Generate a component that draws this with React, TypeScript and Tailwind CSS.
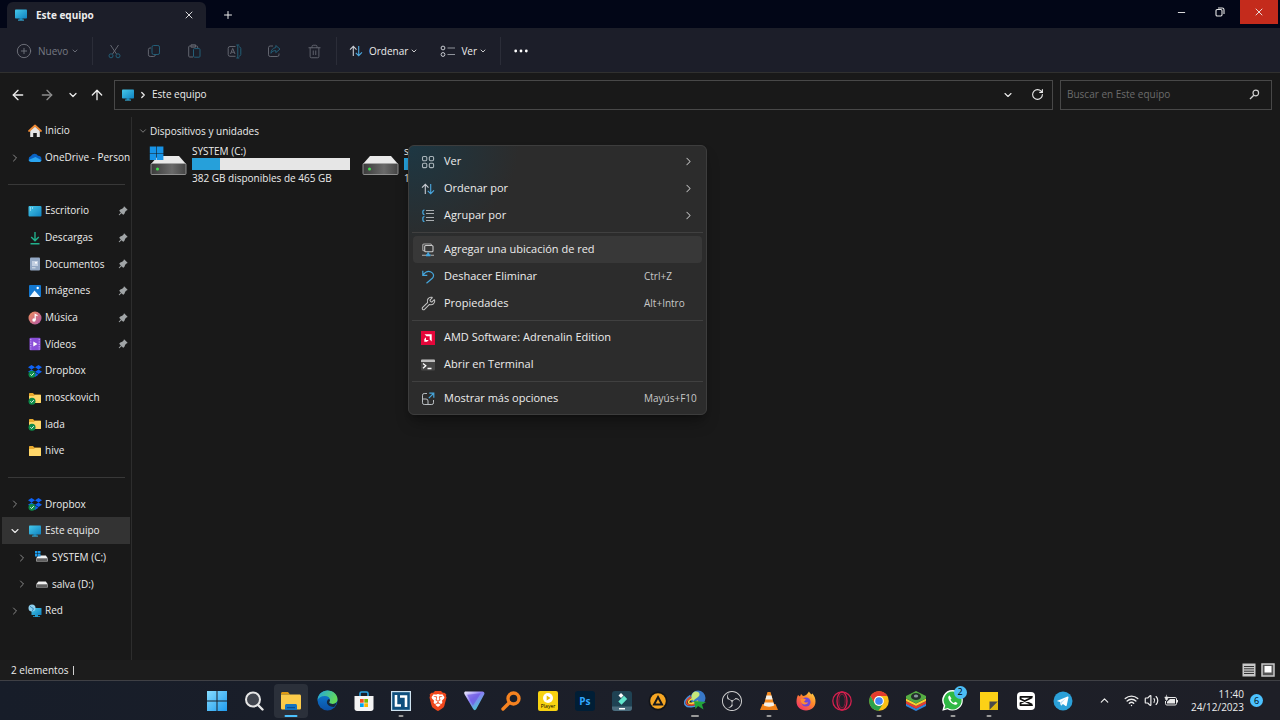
import React from "react";
import {
  ArrowLeft, ArrowRight, ArrowUp, ChevronDown, ChevronRight, ChevronUp, CirclePlus, Plus, X, Minus,
  RotateCw, Trash2, Wrench, Wifi, Volume2,
} from "lucide-react";
import { FaDropbox } from "react-icons/fa";
import { SiBrave, SiObsstudio } from "react-icons/si";
import { TbPinFilled } from "react-icons/tb";

type Kids = { children: React.ReactNode };

/* ---------- small drawings ---------- */

function Svg({ children, className, box = 24 }: Kids & { className: string; box?: number }) {
  return (
    <svg viewBox={`0 0 ${box} ${box}`} className={className} fill="none" aria-hidden="true">
      {children}
    </svg>
  );
}

function Monitor({ className = "size-[14px]" }: { className?: string }) {
  return (
    <Svg className={className} box={14}>
      <path d="M5.5 10h3v2h-3z" fill="#1478a8" />
      <path d="M4 11.6h6v1H4z" fill="#37b3e0" />
      <rect x="1" y="1.500" width="12" height="9" rx=".8" fill="url(#screen)" />
    </Svg>
  );
}

function SortIcon({ className = "size-[14px]" }: { className?: string }) {
  return (
    <Svg className={className} box={14}>
      <path d="M4.3 12V2.4M1 5.6l3.3-3.3 3.2 3.3" stroke="#c9ccd2" strokeWidth="1.1" />
      <path d="M9.7 2v9.6M6.8 8.8l2.9 2.9L13 8.4" stroke="#4aa8e0" strokeWidth="1.1" />
    </Svg>
  );
}

function Folder({ synced = false }: { synced?: boolean }) {
  return (
    <Svg className="size-[14px]" box={14}>
      <path d="M1 3c0-.6.4-1 1-1h3l1.300 1.400H12c.6 0 1 .4 1 1V11c0 .6-.4 1-1 1H2c-.6 0-1-.4-1-1z" fill="#e8a92e" />
      <path d="M1 5h4.800L7 4h5.500c.3 0 .5.2.5.5V11c0 .6-.4 1-1 1H2c-.6 0-1-.4-1-1z" fill="#ffd76a" />
      {synced && <SyncMark />}
    </Svg>
  );
}

function SyncMark() {
  return (
    <g>
      <circle cx="4" cy="10.2" r="3.5" fill="#0d8a4a" />
      <path d="M2.4 10.3l1.200 1.200 2.200-2.300" stroke="#fff" strokeWidth=".9" />
    </g>
  );
}

function DropboxIcon() {
  return (
    <span className="relative block size-[14px]">
      <FaDropbox className="size-[14px] text-[#0f62f5]" />
      <svg viewBox="0 0 14 14" className="absolute inset-0 size-[14px]" fill="none" aria-hidden="true"><SyncMark /></svg>
    </span>
  );
}

function SmallDrive({ system = false }: { system?: boolean }) {
  return (
    <Svg className="size-[14px]" box={14}>
      <path d="M3.4 4.5h7.4L13 7.4H1z" fill="#f2f2f2" />
      <rect x="1" y="7.2" width="12" height="3.6" rx=".8" fill="#8d8d8d" />
      <path d="M2 8.5h10v1H2z" fill="#333" />
      {system && <path d="M0 0h2.5v2.5H0zM3 0h2.5v2.5H3zM0 3h2.5v2.5H0zM3 3h2.5v2.5H3z" fill="#1d9cec" />}
    </Svg>
  );
}

function BigDrive({ system = false }: { system?: boolean }) {
  return (
    <svg viewBox="0 0 38 32" className="h-8 w-[38px] shrink-0" fill="none" aria-hidden="true">
      <path d="M9 12h21L37 20H2z" fill="#e9e9e9" />
      <rect x="2" y="19.500" width="35" height="11" rx="1" fill="url(#driveFront)" stroke="#a5a5a5" strokeWidth=".8" />
      <circle cx="8.500" cy="25" r="1.500" fill="#3ee04c" />
      {system && (
        <g fill="#1793e6">
          <path d="M.8 2.500h6.500v6.500H.8zM7.900 2.500h6.500v6.500H7.900z" />
          <path d="M.8 9.600h6.500v6.500H.8zM7.900 9.600h6.500v6.500H7.900z" />
        </g>
      )}
    </svg>
  );
}

function Defs() {
  return (
    <svg className="absolute size-0" aria-hidden="true">
      <defs>
        <linearGradient id="screen" x1="0" y1="0" x2="1" y2="1"><stop stopColor="#46c8ea" /><stop offset="1" stopColor="#0f82c0" /></linearGradient>
        <linearGradient id="driveFront" x1="0" y1="0" x2="1" y2="0"><stop stopColor="#3a3a3a" /><stop offset=".6" stopColor="#6a6a6a" /><stop offset="1" stopColor="#444" /></linearGradient>
        <linearGradient id="music" x1="0" y1="0" x2="1" y2="1"><stop stopColor="#f0905a" /><stop offset="1" stopColor="#b055a8" /></linearGradient>
        <linearGradient id="win" x1="0" y1="0" x2="1" y2="1"><stop stopColor="#86dcff" /><stop offset="1" stopColor="#1f9bee" /></linearGradient>
        <linearGradient id="edgeA" x1="0" y1="0" x2="1" y2=".4"><stop stopColor="#1fa2e4" /><stop offset="1" stopColor="#63da5a" /></linearGradient>
        <linearGradient id="edgeB" x1="0" y1="0" x2="0" y2="1"><stop stopColor="#0d7fd6" /><stop offset="1" stopColor="#0c4fa3" /></linearGradient>
        <linearGradient id="vpn" x1="0" y1="0" x2=".8" y2="1"><stop stopColor="#f3f1ff" /><stop offset=".45" stopColor="#8a7cf5" /><stop offset="1" stopColor="#3fd6c8" /></linearGradient>
        <linearGradient id="fox" x1="1" y1="0" x2=".2" y2="1"><stop stopColor="#ffe14d" /><stop offset=".45" stopColor="#ff8a2a" /><stop offset="1" stopColor="#f0306a" /></linearGradient>
      </defs>
    </svg>
  );
}

/* ---------- title bar and toolbar ---------- */

function TitleBar() {
  return (
    <header className="flex h-7 items-end bg-[#020617] pl-[7px]">
      <div className="flex h-[26px] w-[199px] items-center rounded-t-md bg-[#1c1e29] px-[7px]">
        <Monitor />
        <span className="ml-2 flex-1 text-[10px] font-bold">Este equipo</span>
        <button type="button" aria-label="Cerrar pestaña" className="p-1"><X className="size-3" strokeWidth={1.8} /></button>
      </div>
      <button type="button" aria-label="Nueva pestaña" className="ml-3 flex h-[26px] w-5 items-center justify-center">
        <Plus className="size-3" strokeWidth={2} />
      </button>
      <div className="ml-auto flex self-start pr-[2px]">
        <button type="button" aria-label="Minimizar" className="flex h-6 w-[38px] items-center justify-center"><Minus className="size-[11px]" strokeWidth={2} /></button>
        <button type="button" aria-label="Restaurar" className="flex h-6 w-[40px] items-center justify-center">
          <Svg className="size-[10px]" box={10}>
            <rect x="1" y="2.500" width="6" height="6.500" rx="1.200" stroke="#e6e6e6" strokeWidth="1.100" />
            <path d="M3 1h4.200C8.400 1 9 1.700 9 2.700V7" stroke="#e6e6e6" strokeWidth="1.100" />
          </Svg>
        </button>
        <button type="button" aria-label="Cerrar" className="flex h-6 w-[38px] items-center justify-center bg-[#c42b1c]"><X className="size-[12px]" strokeWidth={1.800} /></button>
      </div>
    </header>
  );
}

const Divider = () => <span className="h-7 w-px bg-[#2b2d38]" />;

const toolIcons: { label: string; icon: React.ReactNode }[] = [
  { label: "Cortar", icon: (
    <Svg className="size-[15px]" box={15}>
      <path d="M3.500 1l6 9M11.500 1l-6 9" stroke="#62656f" strokeWidth="1" />
      <circle cx="4" cy="11.800" r="2" stroke="#235e77" strokeWidth="1" /><circle cx="11" cy="11.800" r="2" stroke="#235e77" strokeWidth="1" />
    </Svg>) },
  { label: "Copiar", icon: (
    <Svg className="size-[14px]" box={14}>
      <path d="M4 4H3a1.600 1.600 0 0 0-1.600 1.600v5.200A1.800 1.800 0 0 0 3.200 12.500h3.600A1.700 1.700 0 0 0 8.300 11" stroke="#62656f" />
      <rect x="5" y="1.500" width="7.500" height="9" rx="1.600" stroke="#235e77" />
    </Svg>) },
  { label: "Pegar", icon: (
    <Svg className="size-[14px]" box={14}>
      <path d="M6 13H2.700A1 1 0 0 1 1.700 12V3a1 1 0 0 1 1-1h7a1 1 0 0 1 1 1v1M4 .8h4.500v2.400H4z" stroke="#62656f" />
      <rect x="6.500" y="4.600" width="6.500" height="8.600" rx="1" stroke="#235e77" />
    </Svg>) },
  { label: "Cambiar nombre", icon: (
    <Svg className="size-[15px]" box={15}>
      <path d="M8.500 2.500H3A1.800 1.800 0 0 0 1.200 4.300v6.200A1.800 1.800 0 0 0 3 12.300h5.500M3.500 10l2.200-5.600L8 10M4.300 8.200h2.900" stroke="#62656f" />
      <path d="M9.300 1h3M9.300 14h3M10.800 1v13M12 2.800c1.200.2 1.800.8 1.800 1.700v6c0 .9-.6 1.500-1.800 1.700" stroke="#235e77" />
    </Svg>) },
  { label: "Compartir", icon: (
    <Svg className="size-[14px]" box={14}>
      <path d="M6 2H3.200A1.700 1.700 0 0 0 1.500 3.700v7.100a1.700 1.700 0 0 0 1.700 1.700h7.100a1.700 1.700 0 0 0 1.700-1.700V9.500" stroke="#62656f" />
      <path d="M8.800 1.500l4.200 3.600-4.200 3.500V6.600C6.500 6.500 5 7.400 4 9.300c0-3 1.700-5.400 4.800-5.700z" stroke="#235e77" strokeLinejoin="round" />
    </Svg>) },
  { label: "Eliminar", icon: <Trash2 className="size-[15px] text-[#62656f]" strokeWidth={1.500} /> },
];

function ToolBar() {
  return (
    <div role="toolbar" className="flex h-[45px] items-center border-b border-[#30302f] bg-[#1c1e29] pt-[2px] pl-4 text-[10px]">
      <button type="button" className="flex w-[76px] items-center text-[#777a83]">
        <CirclePlus className="size-4" strokeWidth={1.300} />
        <span className="ml-[6px]">Nuevo</span>
        <ChevronDown className="ml-[3px] size-2" strokeWidth={2.500} />
      </button>
      <Divider />
      <div className="flex pr-[2px] pl-[1px]">
        {toolIcons.map((t) => (
          <button key={t.label} type="button" aria-label={t.label} className="flex h-7 w-10 items-center justify-center">{t.icon}</button>
        ))}
      </div>
      <Divider />
      <button type="button" className="ml-3 flex items-center">
        <SortIcon />
        <span className="ml-[6px]">Ordenar</span>
        <ChevronDown className="ml-[2px] size-2" strokeWidth={2.500} />
      </button>
      <button type="button" className="ml-[22px] flex items-center">
        <Svg className="size-[15px]" box={15}>
          <circle cx="3" cy="4" r="1.900" stroke="#c9ccd2" /><circle cx="3" cy="10.500" r="1.900" stroke="#c9ccd2" />
          <path d="M7.500 4H15M7.500 10.500H15" stroke="#8f939b" strokeWidth="1.200" />
        </Svg>
        <span className="ml-[6px]">Ver</span>
        <ChevronDown className="ml-[2px] size-2" strokeWidth={2.500} />
      </button>
      <span className="ml-[13px] flex"><Divider /></span>
      <button type="button" aria-label="Más opciones" className="ml-3 p-[1px]">
        <Svg className="size-[14px]" box={14}>
          <circle cx="1.700" cy="7" r="1.400" fill="#fff" /><circle cx="7" cy="7" r="1.400" fill="#fff" /><circle cx="12.300" cy="7" r="1.400" fill="#fff" />
        </Svg>
      </button>
    </div>
  );
}

function NavBar() {
  return (
    <div className="flex h-[43px] items-center pr-2 pl-[9px] text-[10px]">
      <button type="button" aria-label="Atrás" className="flex w-[18px] justify-center"><ArrowLeft className="size-4" strokeWidth={2} /></button>
      <button type="button" aria-label="Adelante" className="ml-[11px] flex w-[18px] justify-center text-[#8d8d8d]"><ArrowRight className="size-4" strokeWidth={2} /></button>
      <button type="button" aria-label="Recientes" className="ml-2 flex w-[18px] justify-center"><ChevronDown className="size-[12px]" strokeWidth={2.500} /></button>
      <button type="button" aria-label="Subir" className="ml-[6px] flex w-[18px] justify-center"><ArrowUp className="size-4" strokeWidth={2} /></button>
      <div className="ml-[8px] flex h-[30px] flex-1 items-center border border-[#484848] px-[6px]">
        <Monitor />
        <ChevronRight className="ml-[3px] size-[10px]" strokeWidth={3} />
        <span className="ml-1 flex-1">Este equipo</span>
        <button type="button" aria-label="Historial" className="mr-[17px]"><ChevronDown className="size-[12px]" strokeWidth={2.200} /></button>
        <button type="button" aria-label="Actualizar" className="mr-[2px]"><RotateCw className="size-[13px]" strokeWidth={2} /></button>
      </div>
      <label className="ml-[7px] flex h-[30px] w-[212px] items-center border border-[#484848] px-[6px]">
        <input type="text" aria-label="Buscar" placeholder="Buscar en Este equipo" className="w-full bg-transparent outline-none placeholder:text-[#6c6c6c]" />
        <Svg className="mr-[5px] size-[11px] shrink-0" box={11}>
          <circle cx="6.800" cy="4" r="2.800" stroke="#d2d2d2" strokeWidth="1.200" /><path d="M4.800 6.200L1 10" stroke="#d2d2d2" strokeWidth="1.300" />
        </Svg>
      </label>
    </div>
  );
}

/* ---------- side panel ---------- */

type Row = { text: string; icon: React.ReactNode; pin?: boolean; arrow?: "right" | "down"; child?: boolean } | null;

const rows: Row[] = [
  { text: "Inicio", icon: (
    <Svg className="size-[14px]" box={14}>
      <path d="M2.200 6.500L7 2.500l4.800 4V13h-3V9H5.200v4h-3z" fill="#e4e4e4" />
      <path d="M1 7l6-5.500L13 7" stroke="#ef8a35" strokeWidth="1.700" strokeLinecap="round" strokeLinejoin="round" />
    </Svg>) },
  { text: "OneDrive - Persona", arrow: "right", icon: (
    <Svg className="size-[14px]" box={14}>
      <path d="M3.500 11a3 3 0 0 1-.6-5.900A4 4 0 0 1 10 4.700 3.200 3.200 0 0 1 11 11z" fill="#0a63c4" />
      <path d="M3.500 11c-1.400 0-2.500-.8-3-2L7.500 6l6 3.200C13.200 10.300 12.200 11 11 11z" fill="#2aa5f0" />
    </Svg>) },
  null,
  { text: "Escritorio", pin: true, icon: (
    <Svg className="size-[14px]" box={14}><rect x=".5" y="2" width="13" height="10.500" rx="1" fill="url(#screen)" /><path d="M2 4h1M2 6h1M4 4h1" stroke="#d9f6ff" /></Svg>) },
  { text: "Descargas", pin: true, icon: (
    <Svg className="size-[14px]" box={14}><path d="M7 1v8.500M3.200 6L7 9.800 10.800 6M2.500 12.700h9" stroke="#22b08c" strokeWidth="1.400" /></Svg>) },
  { text: "Documentos", pin: true, icon: (
    <Svg className="size-[14px]" box={14}><rect x="2" y=".5" width="10" height="13" rx="1" fill="#93a8c4" /><rect x="4" y="4" width="6" height="5" fill="#c3d0e2" /><circle cx="8" cy="5.800" r="1" fill="#fff" /><path d="M4 10.800h3.500" stroke="#dbe4ef" /></Svg>) },
  { text: "Imágenes", pin: true, icon: (
    <Svg className="size-[14px]" box={14}><rect x="1" y="1" width="12" height="12" rx="1" fill="#1377cf" /><path d="M1.500 13l5-6.500 5.800 6.500z" fill="#f0f8ff" /><circle cx="9.700" cy="4" r="1.200" fill="#fff" /></Svg>) },
  { text: "Música", pin: true, icon: (
    <Svg className="size-[14px]" box={14}><circle cx="7" cy="7" r="6.500" fill="url(#music)" /><circle cx="6" cy="9" r="1.700" fill="#fff" /><path d="M7.200 9V3.500l2.300 1.200" stroke="#fff" strokeWidth="1.200" /></Svg>) },
  { text: "Vídeos", pin: true, icon: (
    <Svg className="size-[14px]" box={14}><rect x="1.500" y=".8" width="11" height="12.500" rx="1" fill="#8a4fd8" /><path d="M2.800 2v10.500M11.200 2v10.500" stroke="#d5b8ff" strokeWidth=".9" strokeDasharray="1.200 1.200" /><path d="M5.300 4.500v5L9.500 7z" fill="#fff" /></Svg>) },
  { text: "Dropbox", icon: <DropboxIcon /> },
  { text: "mosckovich", icon: <Folder synced /> },
  { text: "lada", icon: <Folder synced /> },
  { text: "hive", icon: <Folder /> },
  null,
  { text: "Dropbox", arrow: "right", icon: <DropboxIcon /> },
  { text: "Este equipo", arrow: "down", icon: <Monitor /> },
  { text: "SYSTEM (C:)", arrow: "right", child: true, icon: <SmallDrive system /> },
  { text: "salva (D:)", arrow: "right", child: true, icon: <SmallDrive /> },
  { text: "Red", arrow: "right", icon: (
    <Svg className="size-[14px]" box={14}>
      <rect x="3.500" y="4" width="10" height="7" rx=".6" fill="url(#screen)" /><path d="M7 11h3v1.200h2V13H5v-.8h2z" fill="#229dd0" />
      <circle cx="4" cy="4" r="3.500" fill="#8fd0ee" /><path d="M2 2.500c1.500 0 1 1.500 2.500 1.500S5 6.500 4 7" stroke="#2b81b6" />
    </Svg>) },
];

function SidePanel() {
  return (
    <nav className="w-[132px] shrink-0 border-r border-[#2d2d2d] pr-px pl-[2px] text-[10px]">
      <ul className="grid auto-rows-[27px_27px_26px] grid-cols-1">
        {rows.map((r, i) =>
          r === null ? (
            <li key={i} className="mr-[5px] ml-[6px] flex items-center"><hr className="w-full border-[#383838]" /></li>
          ) : (
            <li key={i} className="min-w-0 overflow-hidden">
              <a href="#" className={`flex h-full items-center whitespace-nowrap ${r.arrow === "down" ? "bg-[#333333]" : ""} ${r.child ? "pl-[14px]" : "pl-[7px]"}`}>
                <span className="w-[19px] shrink-0">
                  {r.arrow === "right" && <ChevronRight className="size-3 text-[#8a8a8a]" strokeWidth={2} />}
                  {r.arrow === "down" && <ChevronDown className="size-3" strokeWidth={2.200} />}
                </span>
                <span className="shrink-0">{r.icon}</span>
                <span className="ml-[3px]">{r.text}</span>
                {r.pin && <TbPinFilled className="mr-[1px] ml-auto size-3 shrink-0 text-[#a0a4a6]" />}
              </a>
            </li>
          ),
        )}
      </ul>
    </nav>
  );
}

/* ---------- drives ---------- */

function Drive({ name, free, used, system }: { name: string; free: string; used: number; system?: boolean }) {
  return (
    <article className="flex w-[212px] gap-[5px] text-[10px] leading-[14px]">
      <BigDrive system={system} />
      <div className="w-[158px] whitespace-nowrap">
        <h3>{name}</h3>
        <div className="h-3 w-full bg-[#e6e6e6]"><div className="h-full bg-[#26a0da]" style={{ width: `${used}%` }} /></div>
        <p className="mt-[1px]">{free}</p>
      </div>
    </article>
  );
}

/* ---------- context menu ---------- */

type Item = { text: string; keys?: string; sub?: boolean; hot?: boolean; icon: React.ReactNode };

const groups: Item[][] = [
  [
    { text: "Ver", sub: true, icon: (
      <Svg className="size-[14px]" box={14}>
        {[1.500, 8.300].map((x) => [1.500, 8.300].map((y) => <rect key={`${x}${y}`} x={x} y={y} width="4.300" height="4.300" rx="1.200" stroke="#aab4ba" strokeWidth="1.100" />))}
      </Svg>) },
    { text: "Ordenar por", sub: true, icon: <SortIcon /> },
    { text: "Agrupar por", sub: true, icon: (
      <Svg className="size-[14px]" box={14}>
        <path d="M5 1.500h8M5 4.500h8M5 8.500h8M5 11.500h8" stroke="#a9adb0" />
        <path d="M3.500 1C1.800 1 1.800 2 1.800 3.300S1.800 5.700 3.500 5.700M3.500 7.500C1.800 7.500 1.800 8.500 1.800 9.900S1.800 12.500 3.500 12.500" stroke="#46a6dc" strokeWidth="1.200" />
      </Svg>) },
  ],
  [
    { text: "Agregar una ubicación de red", hot: true, icon: (
      <Svg className="size-[14px]" box={14}>
        <rect x="1.800" y="1" width="8.700" height="6.800" rx="1" stroke="#a8a8a8" strokeWidth="1.100" />
        <rect x="3.700" y="2.500" width="8.300" height="6.300" rx="1" fill="#383838" stroke="#c8c8c8" strokeWidth="1.100" />
        <path d="M1 12.300h4M9.500 12.300H13" stroke="#b0b0b0" strokeWidth="1.100" />
        <path d="M5 12.300h4.500M7.200 9.500v2.500" stroke="#44a7e0" strokeWidth="2" />
      </Svg>) },
    { text: "Deshacer Eliminar", keys: "Ctrl+Z", icon: (
      <Svg className="size-[14px]" box={14}><path d="M1.800 .8v4.500h4.500M2 5C4 2.300 7 .6 10 2c3 1.400 3.200 4.300 1.300 6.300L5.500 13.300" stroke="#46a6dc" strokeWidth="1.200" /></Svg>) },
    { text: "Propiedades", keys: "Alt+Intro", icon: <Wrench className="size-[15px] text-[#c3c3c3]" strokeWidth={1.700} /> },
  ],
  [
    { text: "AMD Software: Adrenalin Edition", icon: (
      <Svg className="size-[14px]" box={14}><rect width="14" height="14" fill="#e4063a" /><path d="M3.500 3.300h7.200v7.200L8.700 8.500V5.300H5.500z" fill="#fff" /><path d="M5 6.200L3.300 8v2.700H6L7.800 9H5z" fill="#fff" /></Svg>) },
    { text: "Abrir en Terminal", icon: (
      <Svg className="size-[14px]" box={14}><rect y="1.500" width="14" height="11" rx="1" fill="#464646" /><path d="M0 2.500a1 1 0 0 1 1-1h12a1 1 0 0 1 1 1V4H0z" fill="#bdbdbd" /><path d="M2 5.500l2.800 2.300L2 10.200M6.500 10.500h4" stroke="#fff" strokeWidth="1.300" /></Svg>) },
  ],
  [
    { text: "Mostrar más opciones", keys: "Mayús+F10", icon: (
      <Svg className="size-[14px]" box={14}>
        <path d="M6 1.500H3.200A1.700 1.700 0 0 0 1.500 3.200v7.600a1.700 1.700 0 0 0 1.700 1.700h7.600a1.700 1.700 0 0 0 1.700-1.700V8M1.500 7H5a2 2 0 0 1 2 2v3.500" stroke="#b9bec2" />
        <path d="M8.300 1.200h4.500v4.500M12.500 1.500L7.800 6.200" stroke="#46a6dc" strokeWidth="1.200" />
      </Svg>) },
  ],
];

function ContextMenu() {
  return (
    <div
      role="menu"
      className="absolute top-[28px] left-[276px] w-[299px] rounded-md border border-[#3d3d3d] bg-[#2c2c2c] bg-[radial-gradient(ellipse_at_top_left,#1d3743_0,#2c2c2c_110px)] py-[2px] text-[11px] shadow-lg shadow-black/30"
    >
      {groups.map((g, gi) => (
        <div key={gi} className={`mx-[3px] grid auto-rows-[27px] ${gi > 0 ? "mt-[3px] border-t border-[#404040] pt-[3px]" : ""}`}>
          {g.map((it) => (
            <button
              key={it.text}
              type="button"
              role="menuitem"
              className={`mx-[1px] flex items-center rounded pr-[7px] pl-2 text-left ${it.hot ? "bg-[#383838]" : ""}`}
            >
              <span className="flex w-[23px] shrink-0">{it.icon}</span>
              <span className="flex-1">{it.text}</span>
              {it.keys && <kbd className="w-[51px] font-[inherit] text-[10px] whitespace-nowrap text-[#c8c8c8]">{it.keys}</kbd>}
              {it.sub && <ChevronRight className="size-[13px] text-[#c0c0c0]" strokeWidth={1.900} />}
            </button>
          ))}
        </div>
      ))}
    </div>
  );
}

/* ---------- taskbar ---------- */

const apps: { name: string; icon: React.ReactNode; mark?: string; active?: boolean; badge?: string }[] = [
  { name: "Inicio", icon: <Svg className="size-5" box={20}><path d="M0 0h9.500v9.500H0zM10.500 0H20v9.500h-9.500zM0 10.500h9.500V20H0zM10.500 10.500H20V20h-9.500z" fill="url(#win)" /></Svg> },
  { name: "Buscar", icon: <Svg className="size-5" box={20}><circle cx="9" cy="8.500" r="7" fill="#42464f" stroke="#e6e6e6" strokeWidth="2" /><path d="M14 14l4.500 4.500" stroke="#e6e6e6" strokeWidth="2.400" strokeLinecap="round" /></Svg> },
  { name: "Explorador de archivos", active: true, mark: "w-[13px] bg-[#4cc2ff]", icon: (
    <Svg className="size-[22px]" box={22}>
      <path d="M1 3.500C1 2.700 1.700 2 2.500 2h5.500l2 2.500H1z" fill="#e09b13" /><path d="M1 4.500h18.500c.8 0 1.500.7 1.500 1.500v12c0 1-.7 1.500-1.500 1.500h-17C1.700 19.500 1 19 1 18z" fill="#fccb4a" />
      <path d="M5 20v-4.500c0-.8.700-1.500 1.500-1.500h9c.8 0 1.500.7 1.500 1.500V20z" fill="#1774c0" /><path d="M7 17h8v1.200H7z" fill="#0a4e91" />
    </Svg>) },
  { name: "Edge", icon: (
    <Svg className="size-[21px]" box={21}>
      <circle cx="10.500" cy="10.500" r="10" fill="url(#edgeB)" />
      <path d="M.5 10C1 4 5.500.5 10.500.5c6 0 10 4.300 10 8.700 0 3-2.200 4.800-4.800 4.800-2.200 0-3.500-.8-3.500-1.700 0-.7.8-1 .8-2.600C13 7.500 10.700 6 8 6 4 6 1.500 8 .5 10z" fill="url(#edgeA)" />
      <path d="M13 9.700c0 1.600-.8 1.900-.8 2.600 0 .9 1.300 1.700 3.500 1.700 1.700 0 3.200-.8 4-2-.3 1.800-1.300 3.600-2.800 5-2.500-.1-5.500-.7-6.700-3.200-.6-1.500-.2-3 .8-4.300.7-.5 1.500-.4 2 .2z" fill="#16263a" />
    </Svg>) },
  { name: "Microsoft Store", icon: (
    <Svg className="size-5" box={20}>
      <path d="M6 5V2.500C6 1.500 6.700 1 7.500 1h5c.8 0 1.500.5 1.500 1.500V5" stroke="#29a3e4" strokeWidth="1.600" /><path d="M.5 5h19v12.500c0 1.300-1 2.500-2.500 2.500H3C1.500 20 .5 18.800.5 17.500z" fill="#f4f4f4" />
      <path d="M6 8h3.700v3.700H6z" fill="#f25022" /><path d="M10.300 8H14v3.700h-3.700z" fill="#7fba00" /><path d="M6 12.300h3.700V16H6z" fill="#00a4ef" /><path d="M10.300 12.300H14V16h-3.700z" fill="#ffb900" />
    </Svg>) },
  { name: "LT", mark: "w-[5px] bg-[#9a9a9a]", icon: (
    <Svg className="size-5" box={20}><rect x=".6" y=".6" width="18.800" height="18.800" fill="#0f4f7d" stroke="#cfe3f0" strokeWidth="1.200" /><path d="M5 4v10.500h5M9 5.500h6V16" stroke="#fff" strokeWidth="2.600" /></Svg>) },
  { name: "Brave", icon: (
    <span className="relative block size-5">
      <svg viewBox="0 0 20 20" className="absolute inset-0 size-5" aria-hidden="true"><path d="M6 1.500h8l3 3-1 8.500-3 4-3 2-3-2-3-4L3 4.500z" fill="#fff" /></svg>
      <SiBrave className="absolute inset-0 size-5 text-[#f0471c]" />
    </span>) },
  { name: "VPN", icon: <Svg className="size-[21px]" box={20}><path d="M1.500 1.500h16c1.500 0 2.500 1.400 1.700 2.700l-7.500 14c-.7 1.300-2.200 1.300-3 0L.5 4C-.2 2.800.3 1.500 1.500 1.500z" fill="url(#vpn)" /><path d="M3 4.500l13-1.500-7.500 12z" fill="#6a56df" opacity=".65" /></Svg> },
  { name: "Búsqueda", icon: <Svg className="size-5" box={20}><circle cx="12.500" cy="7.500" r="5.500" stroke="#f58220" strokeWidth="3.400" /><path d="M8.500 11.500L2 18" stroke="#f58220" strokeWidth="3.400" strokeLinecap="round" /></Svg> },
  { name: "Player", icon: (
    <span className="flex size-5 flex-col items-center rounded-[2px] bg-[#f7d211] pt-[2px]">
      <Svg className="size-[10px] shrink-0" box={10}><circle cx="5" cy="5" r="5" fill="#fff" /><path d="M3.700 2.500v5L7.500 5z" fill="#e6bd00" /></Svg>
      <span className="text-[5px] leading-[7px] text-black">Player</span>
    </span>) },
  { name: "Photoshop", icon: <span className="flex size-5 items-center justify-center rounded-[3px] bg-[#001e36] text-[10px] leading-none font-bold text-[#31a8ff]">Ps</span> },
  { name: "Filmora", icon: <Svg className="size-5" box={20}><rect width="20" height="20" rx="3" fill="#1f4253" /><path d="M0 15.500h20V17a3 3 0 0 1-3 3H3a3 3 0 0 1-3-3z" fill="#4b6c7d" /><path d="M7 17h6v1.500H7z" fill="#fff" /><path d="M9 2l2.500 2.500L9 7 6.500 4.500z" fill="#fff" /><path d="M12 4.800l3.200 3.200-5.700 5.700-3.200-3.200z" fill="#62e6cd" /></Svg> },
  { name: "AIMP", icon: <Svg className="size-5" box={20}><circle cx="10" cy="10" r="9.500" fill="#121418" /><circle cx="10" cy="10" r="7.800" fill="#f6a623" /><path d="M10 6l4 7.500H6z" stroke="#16181c" strokeWidth="2" /></Svg> },
  { name: "Internet Download Manager", mark: "w-[8px] bg-[#9a9a9a]", icon: (
    <Svg className="size-[22px]" box={22}>
      <circle cx="14" cy="8" r="7.500" fill="#3878c8" /><path d="M10 2c2-1 5.500-.5 5.500 2.500S11 8 9.500 11C7 9 6.500 4.500 10 2z" fill="#c5e67a" />
      <path d="M6.500 5.500c-5 3-7 7-5 9.500 2 3 9 2 14-1" stroke="#4a90dc" strokeWidth="1.600" /><path d="M7 7c-4 2.500-5.500 5-4.300 6.800C4.500 16 11 15 15 12.500" stroke="#e84a2c" strokeWidth="1.600" /><path d="M8 8.800c-3 1.500-4 3-3.300 4C6 14 11 13 14 11" stroke="#f7d23b" strokeWidth="1.600" />
      <path d="M10 11l12 1-4 2.500 1.500 5-5.500-3.500-2.500 3z" fill="#22a43a" />
    </Svg>) },
  { name: "OBS Studio", icon: <SiObsstudio className="size-5 text-[#d6d6d6]" /> },
  { name: "VLC", mark: "w-[5px] bg-[#9a9a9a]", icon: <Svg className="size-5" box={20}><path d="M3.500 13h13l2.500 6H1z" fill="#f08018" /><path d="M8.500 1h3l4 14c-3 1.800-8 1.800-11 0z" fill="#f78b1f" /><path d="M7.500 4.500h5l1.100 4H6.400zM5.500 11.500h9l.8 3c-3 1.500-7.500 1.500-10.600 0z" fill="#f3f0ea" /></Svg> },
  { name: "Firefox", icon: <Svg className="size-5" box={20}><path d="M2 4l2 1.500L5 3l2 2c2-.3 3.500-.8 4.500-2.500L13 .5c.6 1.300 1.600 2 2.200 3l1.300-1c2 2.500 3 5 3 8 0 5.300-4 9-9.500 9S.5 15.800.5 10.800C.5 8 1 6 2 4z" fill="url(#fox)" /><circle cx="10" cy="11" r="4.600" fill="#7047d8" /><path d="M4.500 8c2-1 4-.5 5.500.8L8 10.500c1 1.500 3 1.200 4.200.5-.5 3-5.200 3.500-7 .5z" fill="#ff8b34" /></Svg> },
  { name: "Opera GX", icon: <Svg className="size-5" box={20}><circle cx="10" cy="10" r="9.200" stroke="#d3204e" strokeWidth="1.300" /><ellipse cx="10" cy="10" rx="5" ry="9" stroke="#d3204e" strokeWidth="1.300" /><ellipse cx="10" cy="10" rx="3.200" ry="7" stroke="#a31b40" strokeWidth=".8" /></Svg> },
  { name: "Chrome", mark: "w-[5px] bg-[#9a9a9a]", icon: (
    <Svg className="size-5" box={20}>
      <circle cx="10" cy="10" r="9.800" fill="#fbc116" /><path d="M1.500 5.100A9.800 9.800 0 0 1 18.500 5.100H10a4.900 4.900 0 0 0-4.300 7.300z" fill="#e33b2e" />
      <path d="M1.500 5.100a9.800 9.800 0 0 0 8 14.700l4.700-7.300a4.900 4.900 0 0 1-8.500 0z" fill="#2ba24c" /><circle cx="10" cy="10" r="4.900" fill="#fff" /><circle cx="10" cy="10" r="3.800" fill="#4285f4" />
    </Svg>) },
  { name: "BlueStacks", icon: (
    <Svg className="size-[22px]" box={22}>
      <path d="M1 13.500l10 5 10-5V16l-10 5L1 16z" fill="#2d83dc" /><path d="M1 11l10 5 10-5v2.700l-10 5-10-5z" fill="#e33d34" /><path d="M1 8.500l10 5 10-5V11l-10 5L1 11z" fill="#f7cf33" />
      <path d="M1 6l10-5 10 5v2.500l-10 5-10-5z" fill="#55ae43" /><ellipse cx="11" cy="6.500" rx="5" ry="3.600" fill="#23302a" /><ellipse cx="11" cy="6" rx="2.200" ry="1.600" fill="#8a96a0" />
    </Svg>) },
  { name: "WhatsApp", mark: "w-[5px] bg-[#9a9a9a]", badge: "2", icon: (
    <Svg className="size-[21px]" box={21}>
      <path d="M10.500 0a10.300 10.300 0 1 1-5 19.300L.3 20.700l1.400-5.100A10.300 10.300 0 0 1 10.500 0z" fill="#fff" />
      <path d="M10.500 1.500a9 9 0 1 1-4.700 16.600l-3.500.9 1-3.400A9 9 0 0 1 10.500 1.500z" fill="#2fb944" />
      <path d="M7.600 5.600c-.9.300-1.500 1.200-1.300 2.500.5 3 3.200 6 6.700 6.700 1.300.2 2.400-.5 2.500-1.800l-2.400-1.300-1.200 1.300c-1.600-.6-2.700-1.700-3.400-3.200l1-1.200z" fill="#fff" />
    </Svg>) },
  { name: "Notas rápidas", mark: "w-[5px] bg-[#9a9a9a]", icon: <Svg className="size-5" box={20}><path d="M1 1h18v18H1z" fill="#fcd116" /><path d="M10.500 19v-8.500H19z" fill="#4a4a4a" /><path d="M19 10.500V19h-8.500z" fill="#e0b80f" /></Svg> },
  { name: "CapCut", icon: <Svg className="size-5" box={20}><rect x="1" y="1" width="18" height="18" rx="4" fill="#fff" /><path d="M16 6.500V5.800H4.500v2.200L16 13.500M16 13.500v.7H4.500V12L16 6.500" stroke="#111" strokeWidth="1.800" strokeLinejoin="round" /></Svg> },
  { name: "Telegram", icon: <Svg className="size-5" box={20}><circle cx="10" cy="10" r="9.500" fill="#2ba0d8" /><path d="M3.800 10l10.800-4.500c.6-.2 1 .1.900.8l-1.800 8.300c-.1.600-.6.700-1.100.4l-2.700-2-1.400 1.400c-.3.300-.7.200-.8-.3l-.7-3z" fill="#fff" /><path d="M7.200 11.200l5.500-3.700-4 4.500-.3 2z" fill="#bcdff2" /></Svg> },
];

function Taskbar() {
  return (
    <footer className="grid h-10 shrink-0 grid-cols-[1fr_auto_1fr] items-center border-t border-[#3f4045] bg-linear-to-r from-[#171d29] via-[#1c1f29] to-[#1e1f27]">
      <ul className="col-start-2 flex w-[880px] justify-between">
        {apps.map((a) => (
          <li key={a.name} className="relative">
            <button type="button" aria-label={a.name} className={`flex h-[34px] w-[34px] items-center justify-center rounded ${a.active ? "bg-[#2b303a]" : ""}`}>{a.icon}</button>
            {a.mark && <span className={`absolute bottom-[1px] left-1/2 h-[2px] -translate-x-1/2 rounded-full ${a.mark}`} />}
            {a.badge && <span className="absolute top-[2px] right-[3px] flex size-[13px] items-center justify-center rounded-full bg-[#4cbdf5] text-[9px] text-black">{a.badge}</span>}
          </li>
        ))}
      </ul>
      <div className="flex items-center justify-end pr-[17px]">
        <button type="button" aria-label="Iconos ocultos"><ChevronUp className="size-[13px]" strokeWidth={2.200} /></button>
        <button type="button" aria-label="Red, sonido y batería" className="ml-[13px] flex items-center gap-[5px]">
          <Wifi className="size-[15px]" strokeWidth={2.200} />
          <Volume2 className="size-[15px]" strokeWidth={1.900} />
          <Svg className="size-[14px]" box={14}>
            <path d="M4 3.500h7.200c.8 0 1.300.5 1.300 1.300v4.900c0 .8-.5 1.300-1.300 1.300H2.800c-.8 0-1.300-.5-1.300-1.300V7" stroke="#e8e8e8" /><path d="M3 9.500V7.700l3-2.700h5v4.500z" fill="#e8e8e8" /><path d="M13.400 6v2.500" stroke="#e8e8e8" strokeWidth="1.200" /><path d="M2.500 .8v2.500M.8 3h3.600L3 6.200H2z" stroke="#e8e8e8" fill="#e8e8e8" strokeWidth=".6" />
          </Svg>
        </button>
        <button type="button" className="ml-[13px] text-right text-[10px] leading-[13px]">
          <span className="block">11:40</span>
          <span className="block">24/12/2023</span>
        </button>
        <span className="ml-[6px] flex size-[13px] items-center justify-center rounded-full bg-[#4cc2ff] text-[9px] text-black">6</span>
      </div>
    </footer>
  );
}

export default function App() {
  return (
    <div className="flex min-h-screen flex-col bg-[#191919] font-['Open_Sans','Noto_Sans',sans-serif] text-[#ececec]">
      <Defs />
      <TitleBar />
      <ToolBar />
      <NavBar />
      <div className="flex flex-1 pt-[1px]">
        <SidePanel />
        <main className="relative flex-1">
          <ContextMenu />
          <h2 className="flex items-center pt-[7px] pl-[6px] text-[10px] leading-[14px]">
            <ChevronDown className="mr-[2px] size-[10px] text-[#9a9a9a]" strokeWidth={1.800} />
            Dispositivos y unidades
          </h2>
          <div className="flex pt-[6px] pl-[17px]">
            <Drive name="SYSTEM (C:)" free="382 GB disponibles de 465 GB" used={18} system />
            <Drive name="salva (D:)" free="1 TB" used={36} />
          </div>
        </main>
      </div>
      <div className="flex h-5 items-center bg-[#1c1c1c] pr-[5px] pl-[11px] text-[10px]">
        <span>2 elementos</span>
        <span className="ml-[5px] h-[9px] w-px bg-[#d0d0d0]" />
        <button type="button" aria-label="Detalles" className="ml-auto">
          <Svg className="size-[14px]" box={14}><rect x=".5" y=".5" width="13" height="13" fill="#c7c7c7" /><path d="M2 3.500h10M2 5.800h10M2 8.200h10M2 10.500h10" stroke="#333" /></Svg>
        </button>
        <button type="button" aria-label="Iconos grandes" className="ml-[5px]">
          <Svg className="size-[14px]" box={14}><rect x="1" y="1" width="12" height="12" fill="#555" stroke="#c7c7c7" strokeWidth="1.500" /><rect x="3.500" y="3" width="7" height="6.500" fill="#fff" /></Svg>
        </button>
      </div>
      <Taskbar />
    </div>
  );
}
